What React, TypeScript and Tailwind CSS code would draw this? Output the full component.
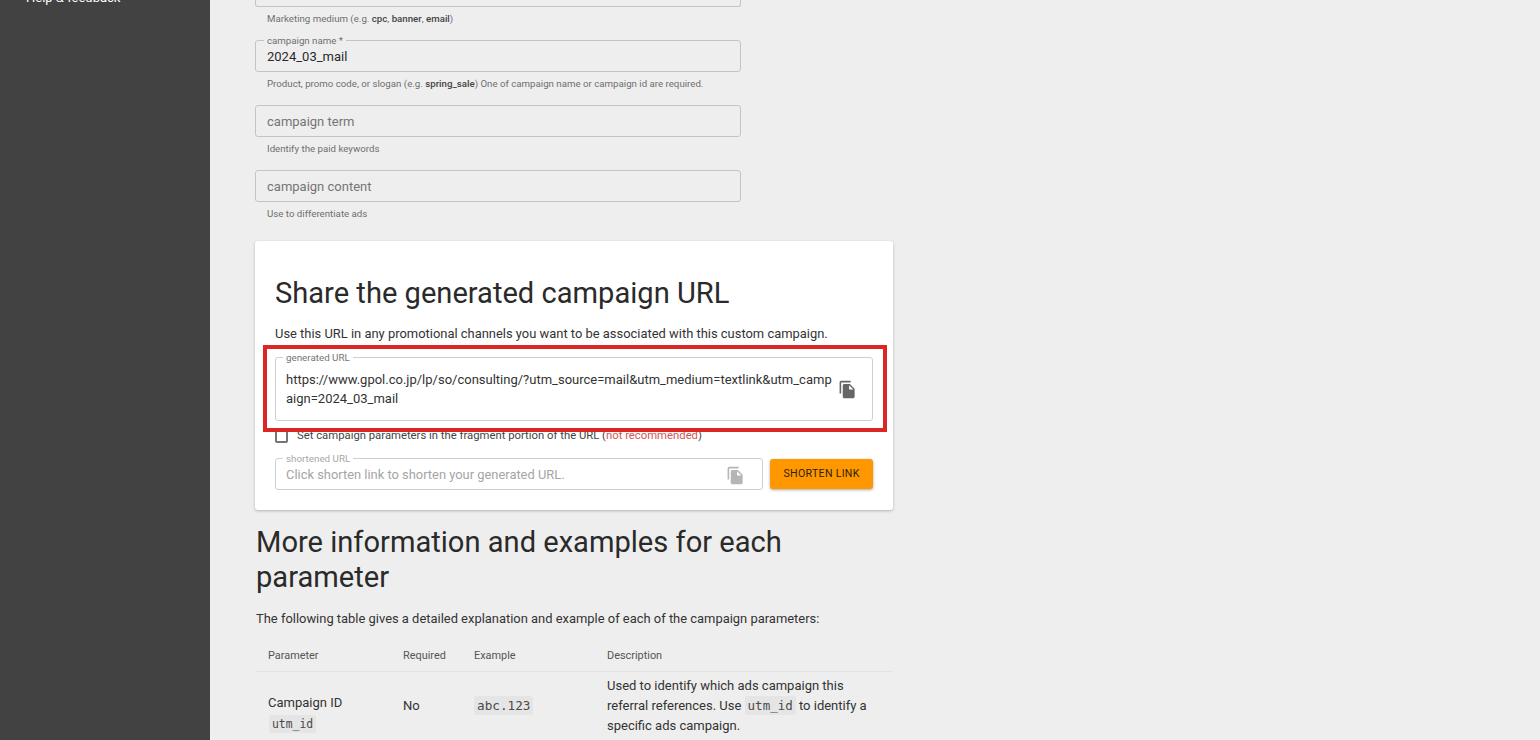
const CopyIcon = ({ className }: { className: string }) => (
  <svg viewBox="0 0 24 24" fill="currentColor" className={className}>
    <path d="M16 1H4c-1.1 0-2 .9-2 2v14h2V3h12V1zm-1 4 6 6v10c0 1.1-.9 2-2 2H7.99C6.89 23 6 22.1 6 21l.01-14c0-1.1.89-2 1.99-2h7zm-1 7h5.5L14 6.5V12z" />
  </svg>
);

const Helper = ({ children }: { children: React.ReactNode }) => (
  <p className="text-[9.7px] leading-[12px] text-[#6f6f6f] pl-3 pt-[6px] h-[33px]">{children}</p>
);

const Field = ({ value, label, placeholder }: { value?: string; label?: string; placeholder?: string }) => (
  <div className="relative w-[486px] h-[32px] border border-[#c4c4c4] rounded-[3px] px-[11px] pt-[2px] flex items-center text-[13px]">
    {label && (
      <span className="absolute left-[8px] -top-[6px] px-[3px] bg-[#eeeeee] text-[9.7px] leading-[12px] text-[#6f6f6f]">{label}</span>
    )}
    {value && <span className="text-[#2a2a2a]">{value}</span>}
    {placeholder && <span className="text-[#757575]">{placeholder}</span>}
  </div>
);

const Code = ({ children, className }: { children: React.ReactNode; className: string }) => (
  <code className={`bg-[#e5e5e5] rounded-[2px] px-[3px] py-[2px] text-[#4a4a4a] ${className}`} style={{ fontFamily: '"DejaVu Sans Mono", monospace' }}>
    {children}
  </code>
);

export default function App() {
  return (
    <div className="h-[740px] w-[1540px] overflow-hidden flex bg-[#eeeeee] text-[#2a2a2a]" style={{ fontFamily: "Roboto, sans-serif" }}>
      <aside className="w-[210px] h-full shrink-0 bg-[#424242] pl-[26px]">
        <div className="-mt-[10px] text-[13px] leading-[16px] text-white">Help &amp; feedback</div>
      </aside>
      <main className="pl-[45px] w-[683px] shrink-0 relative">
        <div className="w-[486px] h-[7px] border border-t-0 border-[#c4c4c4] rounded-b-[3px]" />
        <Helper>
          Marketing medium (e.g. <b className="font-medium text-[#444]">cpc</b>, <b className="font-medium text-[#444]">banner</b>, <b className="font-medium text-[#444]">email</b>)
        </Helper>
        <Field label="campaign name *" value="2024_03_mail" />
        <Helper>
          Product, promo code, or slogan (e.g. <b className="font-medium text-[#444]">spring_sale</b>) One of campaign name or campaign id are required.
        </Helper>
        <Field placeholder="campaign term" />
        <Helper>Identify the paid keywords</Helper>
        <Field placeholder="campaign content" />
        <Helper>Use to differentiate ads</Helper>

        <section className="mt-[6px] w-[638px] h-[269px] bg-white rounded-[3px] shadow-[0_1px_3px_rgba(0,0,0,0.25)] px-[20px] pt-[34px]">
          <h2 className="text-[29.1px] leading-[36px] text-[#2a2a2a]">Share the generated campaign URL</h2>
          <p className="mt-[15px] text-[12.93px] leading-[16px] text-[#333]">Use this URL in any promotional channels you want to be associated with this custom campaign.</p>
          <div className="relative mt-[15px] h-[64px] border border-[#cfcfcf] rounded-[3px] pl-[10px] flex items-center gap-[6px]">
            <span className="absolute left-[7px] -top-[6px] px-[3px] bg-white text-[9.8px] leading-[12px] text-[#757575]">generated URL</span>
            <div className="w-[546px] break-all text-[13px] leading-[19px] text-[#333]">
              https://www.gpol.co.jp/lp/so/consulting/?utm_source=mail&amp;utm_medium=textlink&amp;utm_campaign=2024_03_mail
            </div>
            <CopyIcon className="w-[19px] h-[19px] text-[#666] shrink-0" />
          </div>
          <label className="mt-[8px] flex items-center gap-[9px] h-[14px] text-[11.3px] text-[#444]">
            <span className="w-[13px] h-[13px] border-2 border-[#757575] rounded-[2px]" />
            <span>
              Set campaign parameters in the fragment portion of the URL (<span className="text-[#d9534f]">not recommended</span>)
            </span>
          </label>
          <div className="mt-[15px] flex items-center gap-[7px]">
            <div className="relative w-[489px] h-[32px] border border-[#cfcfcf] rounded-[3px] pl-[10px] pr-[17px] pt-[2px] flex items-center justify-between">
              <span className="absolute left-[7px] -top-[6px] px-[3px] bg-white text-[9.8px] leading-[12px] text-[#a8a8a8]">shortened URL</span>
              <span className="text-[12.9px] text-[#a5a5a5]">Click shorten link to shorten your generated URL.</span>
              <CopyIcon className="w-[19px] h-[19px] text-[#b5b5b5]" />
            </div>
            <button className="w-[103px] h-[30px] bg-[#ff9800] rounded-[3px] shadow-[0_1px_3px_rgba(0,0,0,0.35)] text-[10.6px] font-normal tracking-[0.3px] text-[#2e2008]">SHORTEN LINK</button>
          </div>
        </section>

        <h3 className="mt-[15px] ml-px w-[638px] text-[29.1px] leading-[35px] text-[#2a2a2a]">More information and examples for each parameter</h3>
        <p className="mt-[16px] ml-px text-[12.93px] leading-[16px] text-[#333]">The following table gives a detailed explanation and example of each of the campaign parameters:</p>
        <div className="mt-[22px] w-[638px] grid grid-cols-[135px_71px_133px_1fr] pl-[13px] pb-[8px] border-b border-[#e3e3e3] text-[10.9px] leading-[14px] text-[#555]">
          <span>Parameter</span>
          <span>Required</span>
          <span>Example</span>
          <span>Description</span>
        </div>
        <div className="w-[638px] grid grid-cols-[135px_71px_133px_1fr] items-center pl-[13px] pt-[4px] text-[13px] leading-[20px] text-[#333]">
          <div className="self-start pt-[17px] flex flex-col items-start gap-[2px]">
            <span>Campaign ID</span>
            <Code className="text-[11.4px] leading-[14px] ml-px">utm_id</Code>
          </div>
          <span>No</span>
          <div><Code className="text-[12.7px]">abc.123</Code></div>
          <div>
            Used to identify which ads campaign this<br />
            referral references. Use <Code className="text-[12.5px]">utm_id</Code> to identify a<br />
            specific ads campaign.
          </div>
        </div>
        <div className="absolute left-[53px] top-[345px] w-[624px] h-[87px] border-[4px] border-[#dc2626] pointer-events-none" />
      </main>
    </div>
  );
}
